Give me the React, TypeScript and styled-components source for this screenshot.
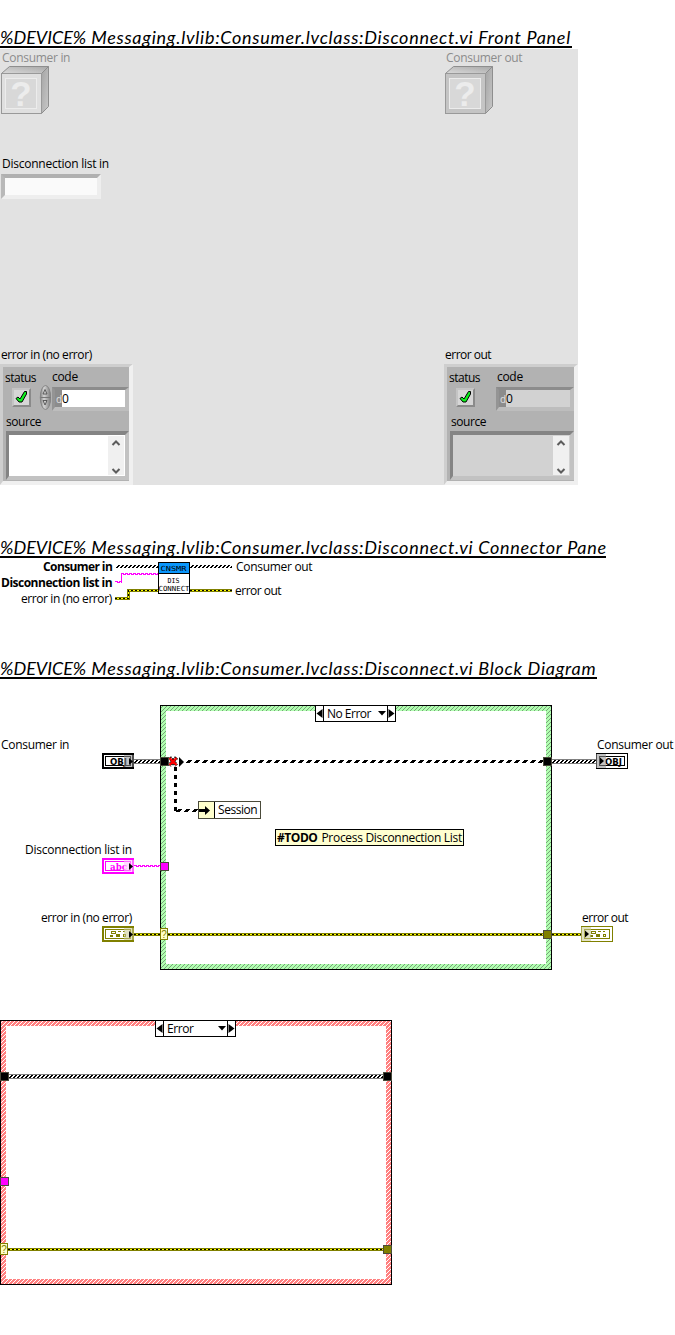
import React from "react";
import styled, { createGlobalStyle } from "styled-components";

const GlobalStyle = createGlobalStyle`
  body { margin: 0; background: #fff; color: #000; }
  svg { display: block; }
`;

const Page = styled.main`
  width: 675px;
  height: 1335px;
  overflow: hidden;
  display: flex;
  flex-direction: column;
  align-items: flex-start;
  font-family: "Open Sans", "Noto Sans", sans-serif;
  font-size: 12px;
`;

const HeadingBar = styled.h1<{ $gap: number; $width: number }>`
  box-sizing: border-box;
  width: ${(p) => p.$width}px;
  height: 20px;
  margin: ${(p) => p.$gap}px 0 0;
  border-bottom: 2px solid #000;
  overflow-x: visible;
  overflow-y: clip;
  white-space: nowrap;
  font: italic 400 18px/18px Lato, sans-serif;
  letter-spacing: 0.72px;
`;

const Prefix = styled.span`
  letter-spacing: 0;
`;

const Label = styled.span<{ $ls?: number; $bold?: boolean; $dim?: boolean; $indent?: number }>`
  display: block;
  height: 16px;
  line-height: 16px;
  white-space: nowrap;
  font-size: 12px;
  margin-left: ${(p) => p.$indent ?? 0}px;
  font-weight: ${(p) => (p.$bold ? 700 : 400)};
  letter-spacing: ${(p) => p.$ls ?? -0.3}px;
  color: ${(p) => (p.$dim ? "#8c8c8c" : "#000")};
`;

/* ---------- Front panel ---------- */

const Panel = styled.section`
  width: 578px;
  height: 436px;
  margin-top: 1px;
  background: #e2e2e2;
  display: grid;
  grid-template-columns: 444px 134px;
`;

const Column = styled.div`
  display: grid;
  grid-template-rows: 106px 191px 139px;
`;

const Slot = styled.div<{ $pad?: number; $top?: number }>`
  padding: ${(p) => p.$top ?? 1}px 0 0 ${(p) => p.$pad ?? 1}px;
`;

const StringField = styled.div`
  box-sizing: border-box;
  width: 100px;
  height: 25px;
  margin-top: 2px;
  border: 4px solid;
  border-color: #b0b0b0 #eeeeee #eeeeee #b8b8b8;
  background: #fafafa;
`;

const Cluster = styled.div<{ $width: number }>`
  box-sizing: border-box;
  width: ${(p) => p.$width}px;
  height: 121px;
  margin-top: 1px;
  border: solid;
  border-width: 3px 4px 4px 3px;
  border-color: #cecece #f0f0f0 #f0f0f0 #cecece;
  background: #b2b2b2;
`;

const ClusterRow = styled.div`
  display: flex;
  height: 47px;
`;

const StatusCell = styled.div`
  width: 35px;
  padding: 3px 0 0 2px;
`;

const CheckButton = styled.div`
  box-sizing: border-box;
  width: 19px;
  height: 19px;
  margin: 2px 0 0 7px;
  border: 2px solid;
  border-color: #c4c4c4 #8a8a8a #8a8a8a #c4c4c4;
  background: #d6d6d6;
`;

const KnobCell = styled.div`
  width: 13px;
  padding-top: 18px;
`;

const CodeCell = styled.div`
  padding-top: 2px;
  margin-left: 1px;
`;

const CodeField = styled.div<{ $fill: string; $wide: boolean }>`
  box-sizing: border-box;
  display: flex;
  width: ${(p) => (p.$wide ? 78 : 77)}px;
  height: 24px;
  margin-top: 2px;
  border: solid;
  border-width: 3px 4px 4px 3px;
  border-color: #8c8c8c #bdbdbd #bdbdbd #949494;
  background: ${(p) => p.$fill};
`;

const Radix = styled.span`
  width: 7px;
  background: #8c8c8c;
  color: #e0e0e0;
  font-size: 10px;
  line-height: 18px;
  text-align: right;
`;

const CodeValue = styled.span`
  font-size: 12px;
  line-height: 17px;
`;

const SourceLabel = styled.div`
  padding-left: 3px;
`;

const SourceBox = styled.div<{ $fill: string; $wide: boolean }>`
  box-sizing: border-box;
  display: flex;
  justify-content: flex-end;
  width: ${(p) => (p.$wide ? 124 : 123)}px;
  height: 49px;
  margin: 1px 0 0 3px;
  padding: 1px 1px 1px 0;
  border: solid;
  border-width: 4px 4px 4px 3px;
  border-color: #848484 #c2c2c2 #c2c2c2 #848484;
  background: ${(p) => p.$fill};
`;

const ScrollBar = styled.div`
  width: 16px;
  background: #f0f0f0;
`;

const Cube = ({ front }: { front: string }) => (
  <svg width="48" height="48" viewBox="0 0 48 48">
    <defs>
      <linearGradient id="cubeTop" x1="0" y1="1" x2="1" y2="0">
        <stop offset="0" stopColor="#dadada" />
        <stop offset="1" stopColor="#a8a8a8" />
      </linearGradient>
      <linearGradient id="cubeSide" x1="0" y1="0" x2="1" y2="1">
        <stop offset="0" stopColor="#a4a4a4" />
        <stop offset="1" stopColor="#c8c8c8" />
      </linearGradient>
    </defs>
    <path d="M.5 7.5 8.5.5h39l-7 7z" fill="url(#cubeTop)" stroke="#8e8e8e" />
    <path d="M40.500 7.500l7-7v40l-7 7z" fill="url(#cubeSide)" stroke="#8e8e8e" />
    <rect x=".5" y="7.500" width="40" height="40" fill={front} stroke="#999" />
    <rect x="4.500" y="12.500" width="31" height="30" fill="#d8d8d8" stroke="#ececec" />
    <text x="20" y="40" textAnchor="middle" fontFamily="Liberation Sans, sans-serif" fontWeight="700" fontSize="35" fill="#ececec">?</text>
  </svg>
);

const Knob = () => (
  <svg width="13" height="25" viewBox="0 0 13 25">
    <defs>
      <linearGradient id="knob">
        <stop offset="0" stopColor="#808080" />
        <stop offset=".35" stopColor="#d4d4d4" />
        <stop offset="1" stopColor="#7c7c7c" />
      </linearGradient>
    </defs>
    <ellipse cx="7.500" cy="12.500" rx="5.200" ry="12" fill="url(#knob)" stroke="#858585" />
    <path d="M2.500 12.500h10" stroke="#777" />
    <path d="M5 9 7 4.500 9 9zM5 15.500h4l-2 4.500z" fill="#ccc" stroke="#505050" strokeWidth=".9" />
  </svg>
);

const CheckMark = () => (
  <svg width="15" height="15" viewBox="0 0 15 15">
    <path d="M2 8.500 4 7l2 2L10.500 1.500h2V4L8 12H5z" fill="#0cf01c" stroke="#000" />
  </svg>
);

const Chevrons = () => (
  <svg width="16" height="39" viewBox="0 0 16 39" fill="none" stroke="#5c5c5c" strokeWidth="2">
    <path d="M4.500 9 8 5.500 11.500 9M4.500 33 8 36.500 11.500 33" />
  </svg>
);

const ErrorCluster = ({ input }: { input: boolean }) => (
  <Cluster $width={input ? 133 : 134}>
    <ClusterRow>
      <StatusCell>
        <Label $ls={-0.5}>status</Label>
        <CheckButton><CheckMark /></CheckButton>
      </StatusCell>
      <KnobCell>{input && <Knob />}</KnobCell>
      <CodeCell>
        <Label $indent={input ? 0 : 1}>code</Label>
        <CodeField $fill={input ? "#fff" : "#d2d2d2"} $wide={!input}>
          <Radix>d</Radix>
          <CodeValue>0</CodeValue>
        </CodeField>
      </CodeCell>
    </ClusterRow>
    <SourceLabel><Label $ls={-0.45} $indent={input ? 0 : 1}>source</Label></SourceLabel>
    <SourceBox $fill={input ? "#fff" : "#d2d2d2"} $wide={!input}>
      <ScrollBar><Chevrons /></ScrollBar>
    </SourceBox>
  </Cluster>
);

/* ---------- Diagrams ---------- */

const Canvas = styled.section<{ $height: number }>`
  position: relative;
  width: 675px;
  height: ${(p) => p.$height}px;
`;

const Node = styled.div<{ $x: number; $y: number }>`
  position: absolute;
  left: ${(p) => p.$x}px;
  top: ${(p) => p.$y}px;
`;

const CaseFrame = styled.div`
  width: 392px;
  height: 265px;
`;

const Selector = styled.div`
  box-sizing: border-box;
  width: 81px;
  height: 17px;
  border: 1px solid #000;
  background: #fff;
  display: grid;
  grid-template-columns: 7px 1fr 7px;
`;

const SelectorName = styled.div`
  display: flex;
  justify-content: space-between;
  border: solid #000;
  border-width: 0 1px;
  padding: 0 0 0 3px;
`;

const SessionNode = styled.div`
  box-sizing: border-box;
  display: flex;
  width: 63px;
  height: 18px;
  border: 1px solid #4a4a3a;
  background: #fff;
`;

const SessionIcon = styled.div`
  width: 15px;
  background: #ffffcc;
  border-right: 1px solid #000;
`;

const SessionText = styled.div`
  padding-left: 3px;
`;

const Comment = styled.div`
  box-sizing: border-box;
  display: flex;
  gap: 4px;
  width: 189px;
  height: 17px;
  padding-left: 1px;
  border: 1px solid #000;
  background: #ffffd0;
`;

const Patterns = () => (
  <svg width="0" height="0">
    <defs>
      <pattern id="hatchGreen" width="4" height="4" patternUnits="userSpaceOnUse">
        <path fill="#b0ffb0" d="M0 0h4v4H0z" />
        <path fill="#78a078" d="M3 0h1v1H3zM2 1h1v1H2zM1 2h1v1H1zM0 3h1v1H0z" />
      </pattern>
      <pattern id="hatchRed" width="4" height="4" patternUnits="userSpaceOnUse">
        <path fill="#ff8080" d="M0 0h4v4H0z" />
        <path fill="#fff" d="M3 0h1v1H3zM2 1h1v1H2zM1 2h1v1H1zM0 3h1v1H0z" />
      </pattern>
    </defs>
  </svg>
);

type Wire = { x: number; y: number; w: number };

/* Twisted class wire, optionally edged with grey rails. */
const ObjectWire = ({ x, y, w, rails = true }: Wire & { rails?: boolean }) => (
  <g shapeRendering="crispEdges">
    {rails && <rect x={x} y={y - 1} width={w} height="5" fill="#808080" />}
    <rect x={x} y={y} width={w} height="3" fill="#fff" />
    {[0, 1, 2].map((r) => (
      <path key={r} d={`M${x} ${y + r + 0.5}h${w}`} stroke="#000" strokeDasharray="2 2" strokeDashoffset={r + 2} />
    ))}
  </g>
);

const ErrorWire = ({ d }: { d: string }) => (
  <g fill="none" shapeRendering="crispEdges">
    <path d={d} stroke="#808000" strokeWidth="3" />
    <path d={d} stroke="#ffff00" />
    <path d={d} stroke="#000" strokeDasharray="2 2" />
  </g>
);

const zigzag = (x: number, y: number, end: number) => {
  let d = `M${x} ${y}`;
  for (let i = x, k = 0; i < end; i += 2, k++) d += `h2v${k % 2 ? -1 : 1}`;
  return d;
};

const StringWire = ({ x, y, end }: { x: number; y: number; end: number }) => (
  <path d={zigzag(x, y, end)} fill="none" stroke="#f0f" shapeRendering="crispEdges" />
);

const DashWire = ({ x, y, w }: Wire) => (
  <g shapeRendering="crispEdges">
    {[0, 1, 2].map((r) => (
      <path key={r} d={`M${x} ${y + r + 0.5}h${w}`} stroke="#000" strokeDasharray="4 4" strokeDashoffset={r + 6} />
    ))}
  </g>
);

const Tunnel = ({ x, y, fill }: { x: number; y: number; fill: string }) => (
  <rect x={x + 0.5} y={y + 0.5} width="8" height="8" fill={fill} stroke="#4a4a3a" />
);

const Case = ({ name, tone, ls, children }: { name: string; tone: string; ls: number; children: React.ReactNode }) => (
  <CaseFrame>
    <svg width="392" height="265" viewBox="0 0 392 265">
      <rect width="392" height="265" />
      <rect x="1" y="1" width="390" height="263" fill={`url(#${tone})`} shapeRendering="crispEdges" />
      <rect x="6" y="6" width="380" height="253" fill="#fff" />
      {children}
      <Tunnel x={0} y={52} fill="#000" />
      <Tunnel x={383} y={52} fill="#000" />
      <Tunnel x={0} y={157} fill="#f0f" />
      <Tunnel x={383} y={225} fill="#808000" />
      <rect x=".5" y="223.500" width="7" height="11" fill="#ffffc8" stroke="#808000" />
      <text x="4" y="233" textAnchor="middle" fontFamily="Liberation Sans, sans-serif" fontSize="10" fill="#808000">?</text>
    </svg>
    <Node $x={155} $y={0}>
      <Selector>
        <svg width="7" height="15"><path d="M6.500 3v9L.500 7.500z" /></svg>
        <SelectorName>
          <Label $ls={ls}>{name}</Label>
          <svg width="9" height="15"><path d="M0 5h8L4 9.500z" /></svg>
        </SelectorName>
        <svg width="7" height="15"><path d="M.500 3v9l6-4.500z" /></svg>
      </Selector>
    </Node>
  </CaseFrame>
);

const Glyph = ({ kind, color, x }: { kind: string; color: string; x: number }) =>
  kind === "error" ? (
    <path
      d={`M${x + 1} 5h5v3h-5zm1 1v1h3v-1zM${x + 8} 5h3v1h-3zM${x + 13} 5h2v1h-2zM${x} 9h3v2h-3zM${x + 6} 8h4v3h-4zM${x + 13} 8h3v3h-3zm1 1v1h1v-1z`}
      fill={color} fillRule="evenodd" shapeRendering="crispEdges"
    />
  ) : (
    <text x={x} y="11.500" textLength="17" lengthAdjust="spacingAndGlyphs" fontFamily={kind === "abc" ? "DejaVu Serif, serif" : "DejaVu Sans, sans-serif"} fontWeight="700" fontSize={kind === "abc" ? 9 : 8.5} fill={color}>
      {kind}
    </text>
  );

const Terminal = ({ kind, color, out }: { kind: string; color: string; out?: boolean }) => (
  <svg width="32" height="16" viewBox="0 0 32 16">
    <rect width="32" height="16" fill={color} />
    <rect x={out ? 1 : 2} y={out ? 1 : 2} width={out ? 30 : 28} height={out ? 14 : 12} fill="#fff" />
    <rect x="3.500" y="3.500" width="25" height="9" fill="#fff" stroke={color} />
    <Glyph kind={kind} color={color} x={out ? 9 : 8} />
    <rect x={out ? 0 : 22} y={out ? 1 : 2} width="10" height={out ? 14 : 12} fill={color === "#000" ? "#909090" : color === "#f0f" ? "#fbf" : "#c8c890"} opacity=".55" />
    <path d={out ? "M4 4.500v7l4-3.500z" : "M27 5v7l4-3.500z"} fill="#000" />
  </svg>
);

const At = ({ x, y, children, ls, bold }: { x: number; y: number; children: string; ls?: number; bold?: boolean }) => (
  <Node $x={x} $y={y}><Label $ls={ls} $bold={bold}>{children}</Label></Node>
);

const Col = ({ side }: { side: "in" | "out" }) => (
  <Column>
    <Slot>
      <Label $dim $indent={1}>{`Consumer ${side}`}</Label>
      <Cube front={side === "in" ? "#dfdfdf" : "#c4c4c4"} />
    </Slot>
    <Slot>
      {side === "in" && (
        <>
          <Label $indent={1} $ls={-0.25}>Disconnection list in</Label>
          <StringField />
        </>
      )}
    </Slot>
    <Slot $pad={0}>
      <Label $indent={1} $ls={side === "in" ? -0.42 : -0.5}>{side === "in" ? "error in (no error)" : "error out"}</Label>
      <ErrorCluster input={side === "in"} />
    </Slot>
  </Column>
);

const Heading = ({ gap, width, part }: { gap: number; width: number; part: string }) => (
  <HeadingBar $gap={gap} $width={width}>
    <Prefix>%DEVICE%</Prefix> Messaging.lvlib:Consumer.lvclass:Disconnect.vi {part}
  </HeadingBar>
);

export default function App() {
  return (
    <Page>
      <GlobalStyle />
      <Heading gap={28} width={572} part="Front Panel" />
      <Panel>
        <Col side="in" />
        <Col side="out" />
      </Panel>

      <Heading gap={53} width={606} part="Connector Pane" />
      <Canvas $height={101}>
        <svg width="675" height="60" viewBox="0 0 675 60">
          <ObjectWire x={116} y={7} w={42} rails={false} />
          <ObjectWire x={190} y={7} w={42} rails={false} />
          <StringWire x={115} y={23.5} end={121} />
          <path d="M121.500 24v-8" stroke="#f0f" shapeRendering="crispEdges" />
          <StringWire x={121} y={15.5} end={158} />
          <ErrorWire d="M115 40.500h13.500v-8H158" />
          <ErrorWire d="M190 32.500h42" />
          <rect x="158.500" y="4.500" width="31" height="31" fill="#fff" stroke="#000" />
          <rect x="159" y="5" width="30" height="10" fill="#0a96fc" />
          <path d="M158 15.500h32" stroke="#000" />
          <g fontFamily="DejaVu Sans Mono, monospace" fontSize="7">
            <text x="160.500" y="12.500" textLength="26" lengthAdjust="spacingAndGlyphs">CNSMR</text>
            <text x="167.500" y="24.500" textLength="12" lengthAdjust="spacingAndGlyphs">DIS</text>
            <text x="158.500" y="32.500" textLength="31" lengthAdjust="spacingAndGlyphs">CONNECT</text>
          </g>
        </svg>
        <At x={43} y={1} ls={-0.6} bold>Consumer in</At>
        <At x={1} y={17} ls={-0.5} bold>Disconnection list in</At>
        <At x={21} y={33} ls={-0.42}>error in (no error)</At>
        <At x={236} y={1}>Consumer out</At>
        <At x={235} y={25} ls={-0.5}>error out</At>
      </Canvas>

      <Heading gap={0} width={597} part="Block Diagram" />
      <Canvas $height={656}>
        <Node $x={0} $y={0}><Patterns /></Node>
        <Node $x={0} $y={0}>
          <svg width="675" height="300" viewBox="0 0 675 300">
            <ObjectWire x={134} y={81} w={27} />
            <ObjectWire x={552} y={81} w={44} />
            <StringWire x={134} y={186.5} end={160} />
            <ErrorWire d="M134 255.500h26" />
            <ErrorWire d="M552 255.500h29" />
          </svg>
        </Node>
        <Node $x={160} $y={26}>
          <Case name="No Error" tone="hatchGreen" ls={-0.5}>
            <DashWire x={26} y={55} w={357} />
            <DashWire x={16} y={104} w={24} />
            <path d="M15.500 62v44" stroke="#000" strokeWidth="3" strokeDasharray="4 4" />
            <ErrorWire d="M8 229.500h375" />
            <path d="M9.500 52.500l7 8M16.500 52.500l-7 8" stroke="#000" strokeWidth="4" strokeDasharray="1.500 1" />
            <path d="M9.500 53l7 7M16.500 53l-7 7" stroke="#f00" strokeWidth="2.200" />
            <path d="M19 52v10l5-5z" fill="#000" />
          </Case>
        </Node>
        <Node $x={0} $y={341}>
          <Case name="Error" tone="hatchRed" ls={-0.45}>
            <ObjectWire x={9} y={55} w={374} />
            <ErrorWire d="M8 229.500h375" />
          </Case>
        </Node>
        <Node $x={198} $y={122}>
          <SessionNode>
            <SessionIcon>
              <svg width="15" height="16"><path d="M0 8.500h8" stroke="#000" strokeWidth="3" /><path d="M6 4v9l5-4.500z" /></svg>
            </SessionIcon>
            <SessionText><Label $ls={-0.45}>Session</Label></SessionText>
          </SessionNode>
        </Node>
        <Node $x={275} $y={150}>
          <Comment>
            <Label $bold $ls={-0.45}>#TODO</Label>
            <Label $ls={-0.3}>Process Disconnection List</Label>
          </Comment>
        </Node>
        <Node $x={102} $y={74}><Terminal kind="OBJ" color="#000" /></Node>
        <Node $x={102} $y={179}><Terminal kind="abc" color="#f0f" /></Node>
        <Node $x={102} $y={247}><Terminal kind="error" color="#808000" /></Node>
        <Node $x={596} $y={74}><Terminal kind="OBJ" color="#000" out /></Node>
        <Node $x={581} $y={247}><Terminal kind="error" color="#808000" out /></Node>
        <At x={1} y={58}>Consumer in</At>
        <At x={25} y={163} ls={-0.25}>Disconnection list in</At>
        <At x={41} y={231} ls={-0.42}>error in (no error)</At>
        <At x={597} y={58}>Consumer out</At>
        <At x={582} y={231} ls={-0.5}>error out</At>
      </Canvas>
    </Page>
  );
}
